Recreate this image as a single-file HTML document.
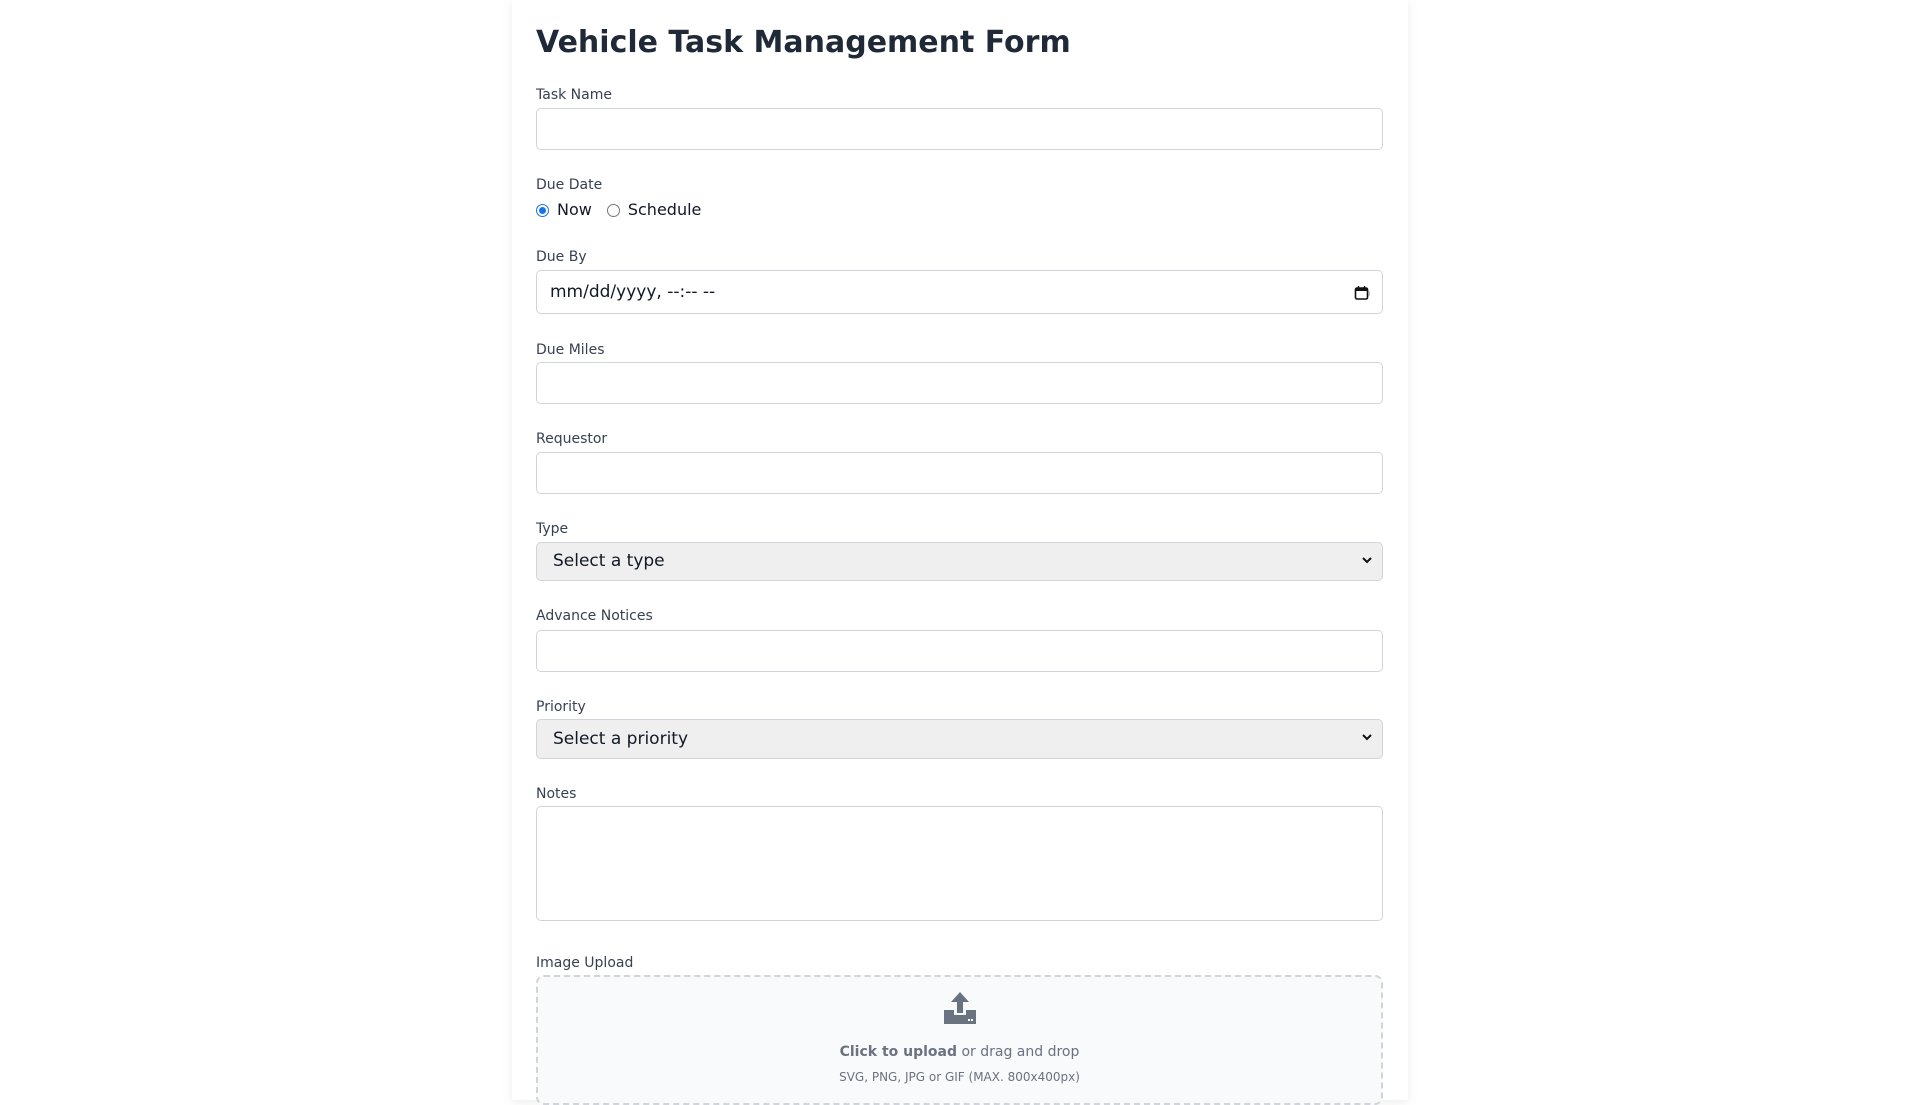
<!DOCTYPE html>
<html><head><meta charset="utf-8"><style>
*{box-sizing:border-box;margin:0;padding:0}
body{width:1920px;height:1080px;overflow:hidden;background:#fff;font-family:"DejaVu Sans","Liberation Sans",sans-serif;position:relative}
.card{position:absolute;left:512px;top:0;width:896px;height:1100px;background:#fff;box-shadow:0 2px 10px rgba(0,0,0,.08)}
.a{position:absolute;left:536px}
h1{position:absolute;left:536px;top:21px;font-size:30px;font-weight:bold;color:#1f2937;line-height:44px}
.l{font-size:14px;color:#374151;line-height:20px}
.i{width:847px;height:42px;border:1px solid #d1d5db;border-radius:5px;background:#fff}
.s{width:847px;height:39px;border:1px solid #d1d5db;border-radius:5px;background:#efefef;font-size:17px;color:#111827;padding-left:16px;line-height:37px}
.chev{position:absolute;right:8px;top:10px}
</style></head><body>
<div class="card"></div>
<h1>Vehicle Task Management Form</h1>
<div class="a l" style="top:85px">Task Name</div>
<div class="a i" style="top:108px"></div>
<div class="a l" style="top:175px">Due Date</div>
<div class="a" style="top:199px;font-size:16px;color:#111827;line-height:22px;display:flex;align-items:center">
<span style="width:13px;height:13px;border-radius:50%;border:1px solid #1a73e8;display:inline-block;position:relative;margin-right:8px"><span style="position:absolute;left:2px;top:2px;width:7px;height:7px;border-radius:50%;background:#1a73e8"></span></span>Now
<span style="width:13px;height:13px;border-radius:50%;border:1px solid #767676;display:inline-block;margin:0 8px 0 15px"></span>Schedule</div>
<div class="a l" style="top:247px">Due By</div>
<div class="a i" style="top:270px;height:44px;font-size:17px;color:#111827;padding-left:13px;line-height:42px">mm/dd/yyyy, --:-- --
<svg style="position:absolute;right:12px;top:14px" width="16" height="16" viewBox="0 0 16 16"><rect x="1.5" y="3" width="12" height="11" rx="1.5" fill="none" stroke="#111" stroke-width="1.6"/><rect x="1.5" y="3" width="12" height="3" fill="#111"/><path d="M4.5 1v3M10.5 1v3" stroke="#111" stroke-width="1.4"/><path d="M14.5 6a4 4 0 0 1 0 5" stroke="#999" fill="none"/></svg></div>
<div class="a l" style="top:340px">Due Miles</div>
<div class="a i" style="top:362px;height:42px"></div>
<div class="a l" style="top:429px">Requestor</div>
<div class="a i" style="top:452px;height:42px"></div>
<div class="a l" style="top:519px">Type</div>
<div class="a s" style="top:542px">Select a type<svg class="chev" width="14" height="14" viewBox="0 0 14 14"><path d="M3 5l4 4 4-4" fill="none" stroke="#111" stroke-width="2"/></svg></div>
<div class="a l" style="top:606px">Advance Notices</div>
<div class="a i" style="top:630px;height:42px"></div>
<div class="a l" style="top:697px">Priority</div>
<div class="a s" style="top:719px;height:40px;line-height:38px">Select a priority<svg class="chev" width="14" height="14" viewBox="0 0 14 14"><path d="M3 5l4 4 4-4" fill="none" stroke="#111" stroke-width="2"/></svg></div>
<div class="a l" style="top:784px">Notes</div>
<div class="a i" style="top:806px;height:115px"></div>
<div class="a l" style="top:953px">Image Upload</div>
<div class="a" style="top:975px;width:847px;height:130px;border:2px dashed #d1d5db;border-radius:8px;background:#f9fafb;text-align:center">
<svg style="margin-top:14px" width="34" height="34" viewBox="0 0 34 34"><path d="M17 1l-9 10h6v11h6V11h6z" fill="#6b7280"/><path d="M1 19h10v5h12v-5h10v14H1z" fill="#6b7280"/><rect x="25" y="28" width="2" height="2" fill="#fff"/><rect x="28" y="28" width="2" height="2" fill="#fff"/></svg>
<div style="font-size:14px;color:#6b7280;margin-top:13px;line-height:20px"><b>Click to upload</b> or drag and drop</div>
<div style="font-size:12px;color:#6b7280;margin-top:7px;line-height:16px">SVG, PNG, JPG or GIF (MAX. 800x400px)</div>
</div>
</body></html>
